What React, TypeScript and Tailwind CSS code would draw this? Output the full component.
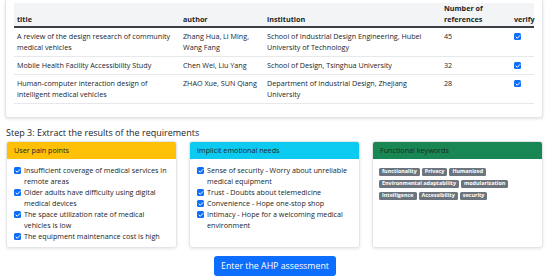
import { Check } from "lucide-react";

const papers = [
  {
    title: "A review of the design research of community medical vehicles",
    author: "Zhang Hua, Li Ming, Wang Fang",
    institution: "School of Industrial Design Engineering, Hubei University of Technology",
    refs: 45,
  },
  {
    title: "Mobile Health Facility Accessibility Study",
    author: "Chen Wei, Liu Yang",
    institution: "School of Design, Tsinghua University",
    refs: 32,
  },
  {
    title: "Human-computer interaction design of intelligent medical vehicles",
    author: "ZHAO Xue, SUN Qiang",
    institution: "Department of Industrial Design, Zhejiang University",
    refs: 28,
  },
];

const painPoints = [
  "Insufficient coverage of medical services in remote areas",
  "Older adults have difficulty using digital medical devices",
  "The space utilization rate of medical vehicles is low",
  "The equipment maintenance cost is high",
];

const emotionalNeeds = [
  "Sense of security - Worry about unreliable medical equipment",
  "Trust - Doubts about telemedicine",
  "Convenience - Hope one-stop shop",
  "Intimacy - Hope for a welcoming medical environment",
];

const keywordRows = [
  ["functionality", "Privacy", "Humanized"],
  ["Environmental adaptability", "modularization"],
  ["Intelligence", "Accessibility", "security"],
];

function Box() {
  return (
    <span className="mt-[2px] flex h-[7px] w-[7px] shrink-0 items-center justify-center rounded-[1.5px] bg-[#0d6efd]">
      <Check className="h-[6px] w-[6px] text-white" strokeWidth={4} />
    </span>
  );
}

function CheckList({ items }: { items: string[] }) {
  return (
    <ul className="flex flex-col">
      {items.map((t) => (
        <li key={t} className="flex gap-[3px]">
          <Box />
          <span>{t}</span>
        </li>
      ))}
    </ul>
  );
}

export default function App() {
  return (
    <div className="h-[279px] w-[550px] overflow-hidden bg-white font-['Open_Sans',sans-serif] text-[7.2px] leading-[11px] text-[#212529]">
      <div className="pl-[5px] pr-[7px]">
        <div className="rounded-b-[3px] border border-t-0 border-[#e3e5e8] bg-white px-[8px] pb-[13px] pt-[3px] shadow-[0_1px_3px_rgba(0,0,0,0.12)]">
          <table className="w-full table-fixed border-collapse">
            <colgroup>
              <col className="w-[166px]" />
              <col className="w-[84px]" />
              <col className="w-[177px]" />
              <col className="w-[70px]" />
              <col />
            </colgroup>
            <thead className="bg-[#f3f4f5]">
              <tr className="border-b-2 border-[#3d4146]">
                <th className="px-[3px] pb-[1px] pt-0 text-left align-bottom font-bold">title</th>
                <th className="px-[3px] pb-[1px] pt-0 text-left align-bottom font-bold">author</th>
                <th className="px-[3px] pb-[1px] pt-0 text-left align-bottom font-bold">institution</th>
                <th className="px-[3px] pb-[1px] pt-0 text-left align-bottom font-bold">Number of references</th>
                <th className="px-[3px] pb-[1px] pt-0 text-left align-bottom font-bold">verify</th>
              </tr>
            </thead>
            <tbody>
              {papers.map((p) => (
                <tr key={p.title} className="border-b border-[#e6e8ea]">
                  <td className="px-[3px] py-[3px] align-top">{p.title}</td>
                  <td className="px-[3px] py-[3px] align-top">{p.author}</td>
                  <td className="px-[3px] py-[3px] align-top">{p.institution}</td>
                  <td className="px-[3px] py-[3px] align-top">{p.refs}</td>
                  <td className="px-[3px] py-[3px] align-top">
                    <Box />
                  </td>
                </tr>
              ))}
            </tbody>
          </table>
        </div>
      </div>

      <h3 className="mt-[8px] pl-[6px] text-[9px] font-medium leading-[13px]">
        Step 3: Extract the results of the requirements
      </h3>

      <div className="mt-[2px] grid grid-cols-3 gap-[12px] pl-[6px] pr-[7px]">
        <div className="h-[107px] overflow-hidden rounded-[3px] border border-[#e3e5e8] shadow-[0_1px_3px_rgba(0,0,0,0.1)]">
          <div className="flex h-[17px] items-center bg-[#ffc107] px-[7px]">User pain points</div>
          <div className="px-[7px] pt-[6px]">
            <CheckList items={painPoints} />
          </div>
        </div>
        <div className="h-[107px] overflow-hidden rounded-[3px] border border-[#e3e5e8] shadow-[0_1px_3px_rgba(0,0,0,0.1)]">
          <div className="flex h-[17px] items-center bg-[#0dcaf0] px-[7px]">Implicit emotional needs</div>
          <div className="px-[7px] pt-[6px]">
            <CheckList items={emotionalNeeds} />
          </div>
        </div>
        <div className="h-[107px] overflow-hidden rounded-[3px] border border-[#e3e5e8] shadow-[0_1px_3px_rgba(0,0,0,0.1)]">
          <div className="flex h-[17px] items-center bg-[#198754] px-[7px] text-[#1b2a22]">Functional keywords</div>
          <div className="flex flex-col gap-[4px] px-[6px] pt-[9px]">
            {keywordRows.map((row, i) => (
              <div key={i} className="flex gap-[2px]">
                {row.map((k) => (
                  <span
                    key={k}
                    className="flex h-[8px] items-center rounded-[1.5px] bg-[#6c757d] px-[3px] text-[5.4px] font-bold leading-none text-white"
                  >
                    {k}
                  </span>
                ))}
              </div>
            ))}
          </div>
        </div>
      </div>

      <div className="mt-[8px] flex justify-center">
        <button className="h-[20px] w-[122px] rounded-[3px] bg-[#0d6efd] text-[8.8px] leading-none text-white">
          Enter the AHP assessment
        </button>
      </div>
    </div>
  );
}
